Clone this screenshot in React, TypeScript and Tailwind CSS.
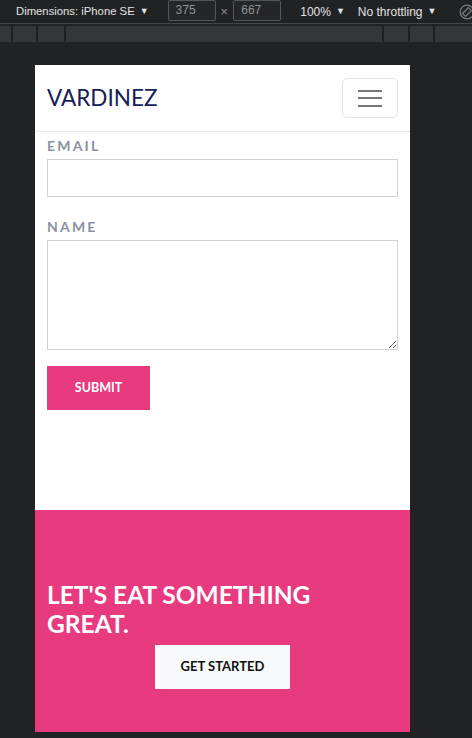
import React from "react";

const PINK = "bg-[#e83a7f]";

function DevToolbar() {
  return (
    <div className="font-['Liberation_Sans',Arial,sans-serif] whitespace-nowrap">
      <div className="h-[24px] flex items-center text-[11.3px] text-[#e3e3e3] border-b border-[#45474b]">
        <span className="ml-[16px] shrink-0">Dimensions: iPhone SE</span>
        <span className="ml-[5px] text-[9px] shrink-0">▼</span>
        <div className="ml-[19px] shrink-0 w-[48px] h-[21px] -mt-[2px] border border-[#55575b] bg-[#252628] rounded-[2px] text-[#8f9296] pl-[7px] leading-[19px] text-[12px]">375</div>
        <span className="mx-[5px] shrink-0 text-[#8f9296] text-[13px]">×</span>
        <div className="shrink-0 w-[48px] h-[21px] -mt-[2px] border border-[#55575b] bg-[#252628] rounded-[2px] text-[#8f9296] pl-[7px] leading-[19px] text-[12px]">667</div>
        <span className="ml-[19px] shrink-0 text-[12px]">100%</span>
        <span className="ml-[5px] text-[9px] shrink-0">▼</span>
        <span className="ml-[13px] shrink-0 text-[12px]">No throttling</span>
        <span className="ml-[5px] text-[9px] shrink-0">▼</span>
        <svg className="ml-[23px] shrink-0" width="16" height="16" viewBox="0 0 16 16" fill="none" stroke="#7d7f83" strokeWidth="1.2">
          <circle cx="8" cy="8" r="6.8" />
          <path d="M3.5 9.5 L9.5 3.5 L12.5 6.5 L6.5 12.5 Z" />
        </svg>
      </div>
      <div className="h-[2px]" />
      <div className="h-[16px] bg-[#35363a] flex">
        <div className="w-[11px]" />
        <div className="w-[2px] bg-[#1f2023]" />
        <div className="w-[23px]" />
        <div className="w-[2px] bg-[#1f2023]" />
        <div className="w-[26px]" />
        <div className="w-[2px] bg-[#1f2023]" />
        <div className="w-[316px]" />
        <div className="w-[2px] bg-[#1f2023]" />
        <div className="w-[24px]" />
        <div className="w-[2px] bg-[#1f2023]" />
        <div className="w-[23px]" />
        <div className="w-[2px] bg-[#1f2023]" />
      </div>
    </div>
  );
}

function Navbar() {
  return (
    <nav className="h-[67px] border-b border-[#e5e5e5] flex items-center justify-between px-[12px]">
      <span className="text-[22.5px] text-[#16205a] leading-none">VARDINEZ</span>
      <button className="w-[56px] h-[40px] border border-[#e3e3e3] rounded-[5px] flex flex-col items-center justify-center gap-[5.5px]">
        <span className="block w-[24px] h-[2px] bg-[#777]" />
        <span className="block w-[24px] h-[2px] bg-[#777]" />
        <span className="block w-[24px] h-[2px] bg-[#777]" />
      </button>
    </nav>
  );
}

function Field({ label, multiline }: { label: string; multiline?: boolean }) {
  return (
    <div>
      <label className="block text-[14px] leading-[20px] font-bold tracking-[2.2px] text-[#8c91a1] mb-[3px]">
        {label}
      </label>
      {multiline ? (
        <textarea className="block w-full h-[110px] border border-[#cfd3d8] bg-white outline-none" />
      ) : (
        <input className="block w-full h-[38px] border border-[#cfd3d8] bg-white outline-none" />
      )}
    </div>
  );
}

export default function App() {
  return (
    <div className="w-[472px] h-[738px] bg-[#212224] overflow-hidden">
      <DevToolbar />
      <div className="pt-[23px] pl-[35px]">
        <div className="w-[375px] h-[667px] bg-white flex flex-col font-['Lato',sans-serif]">
          <Navbar />
          <form className="px-[12px] pt-[4px] flex flex-col" onSubmit={e => e.preventDefault()}>
            <Field label="EMAIL" />
            <div className="h-[20px]" />
            <Field label="NAME" multiline />
            <button className={`mt-[16px] w-[103px] h-[44px] ${PINK} text-white text-[12.5px] font-bold`}>
              SUBMIT
            </button>
          </form>
          <section className={`mt-auto h-[222px] ${PINK} px-[12px] pt-[70px]`}>
            <h2 className="text-[24.5px] leading-[1.2] font-bold text-white max-w-[310px]">
              LET'S EAT SOMETHING GREAT.
            </h2>
            <div className="flex justify-center mt-[6px]">
              <button className="w-[135px] h-[44px] bg-[#f8f9fa] text-[#111] text-[13px] font-bold">
                GET STARTED
              </button>
            </div>
          </section>
        </div>
      </div>
    </div>
  );
}
